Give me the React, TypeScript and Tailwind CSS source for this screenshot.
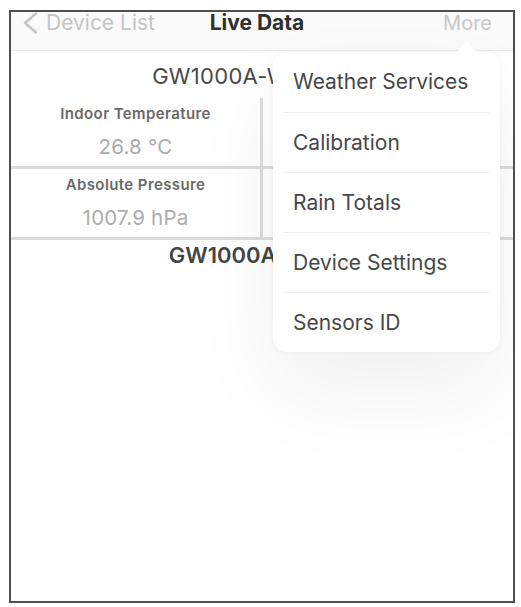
const menuItems = [
  "Weather Services",
  "Calibration",
  "Rain Totals",
  "Device Settings",
  "Sensors ID",
];

const readings = [
  { label: "Indoor Temperature", value: "26.8 °C" },
  { label: "Outdoor Temperature", value: "24.1 °C" },
  { label: "Absolute Pressure", value: "1007.9 hPa" },
  { label: "Relative Pressure", value: "1012.4 hPa" },
];

function BackChevron() {
  return (
    <svg width="17" height="22" viewBox="0 0 17 22" fill="none">
      <polyline
        points="14,1.5 3,11 14,20.5"
        stroke="#c4c4c4"
        strokeWidth="2.4"
        strokeLinecap="round"
        strokeLinejoin="round"
      />
    </svg>
  );
}

function ReadingCell({
  label,
  value,
  divider,
}: {
  label: string;
  value: string;
  divider: boolean;
}) {
  return (
    <div
      className={`flex h-[71px] flex-col items-center border-b-[3px] border-[#dcdcdc] pt-[6px] ${
        divider ? "border-r-[3px]" : ""
      }`}
    >
      <div className="text-[15px] font-semibold leading-[20px] tracking-[0.4px] text-[#6a6a6a]">
        {label}
      </div>
      <div className="mt-[10px] text-[20.5px] leading-[26px] tracking-[0.2px] text-[#acacac]">
        {value}
      </div>
    </div>
  );
}

export default function App() {
  return (
    <div className="h-[607px] w-[521px] bg-white pl-[9px] pt-[10px] font-['Inter',sans-serif]">
      <div className="relative h-[593px] w-[506px] overflow-hidden border-2 border-[#4f4f4f] bg-white">
        {/* navigation bar */}
        <div className="grid h-[39px] grid-cols-[1fr_auto_1fr] items-start border-b border-[#ececec] bg-[#fafafa] pl-[11px] pr-[21px] pt-[0px]">
          <div className="flex h-[22px] items-center gap-[7px]">
            <BackChevron />
            <span className="text-[21px] leading-[22px] text-[#c4c4c4]">
              Device List
            </span>
          </div>
          <div className="text-[21px] font-bold leading-[22px] text-[#2f2f2f]">
            Live Data
          </div>
          <div className="text-right text-[20px] leading-[22px] text-[#c8c8c8]">
            More
          </div>
        </div>

        {/* first station */}
        <div className="flex h-[47px] items-center justify-center pt-[4px] text-[22px] tracking-[0.3px] text-[#4a4a4a]">
          GW1000A-WIFI3C2E
        </div>
        <div className="grid grid-cols-[252px_1fr]">
          {readings.map((r, i) => (
            <ReadingCell
              key={r.label}
              label={r.label}
              value={r.value}
              divider={i % 2 === 0}
            />
          ))}
        </div>

        {/* second station */}
        <div className="flex h-[30px] items-center justify-center text-[22px] font-semibold text-[#454545]">
          GW1000A-C8D21
        </div>

        {/* "More" dropdown */}
        <div className="absolute left-[262px] top-[40px] w-[227px] rounded-[14px] bg-white shadow-[0_40px_90px_rgba(0,0,0,0.06),0_0_6px_rgba(0,0,0,0.05)]">
          <div className="absolute -top-[7px] left-[187px] h-[14px] w-[14px] rotate-45 bg-white" />
          {menuItems.map((item, i) => (
            <div key={item}>
              {i > 0 && <div className="mx-[10px] h-px bg-[#efefef]" />}
              <div
                className={`flex items-center pl-[20px] text-[21px] text-[#474747] ${
                  i === 0 ? "h-[60px]" : "h-[59px]"
                }`}
              >
                {item}
              </div>
            </div>
          ))}
        </div>
      </div>
    </div>
  );
}
